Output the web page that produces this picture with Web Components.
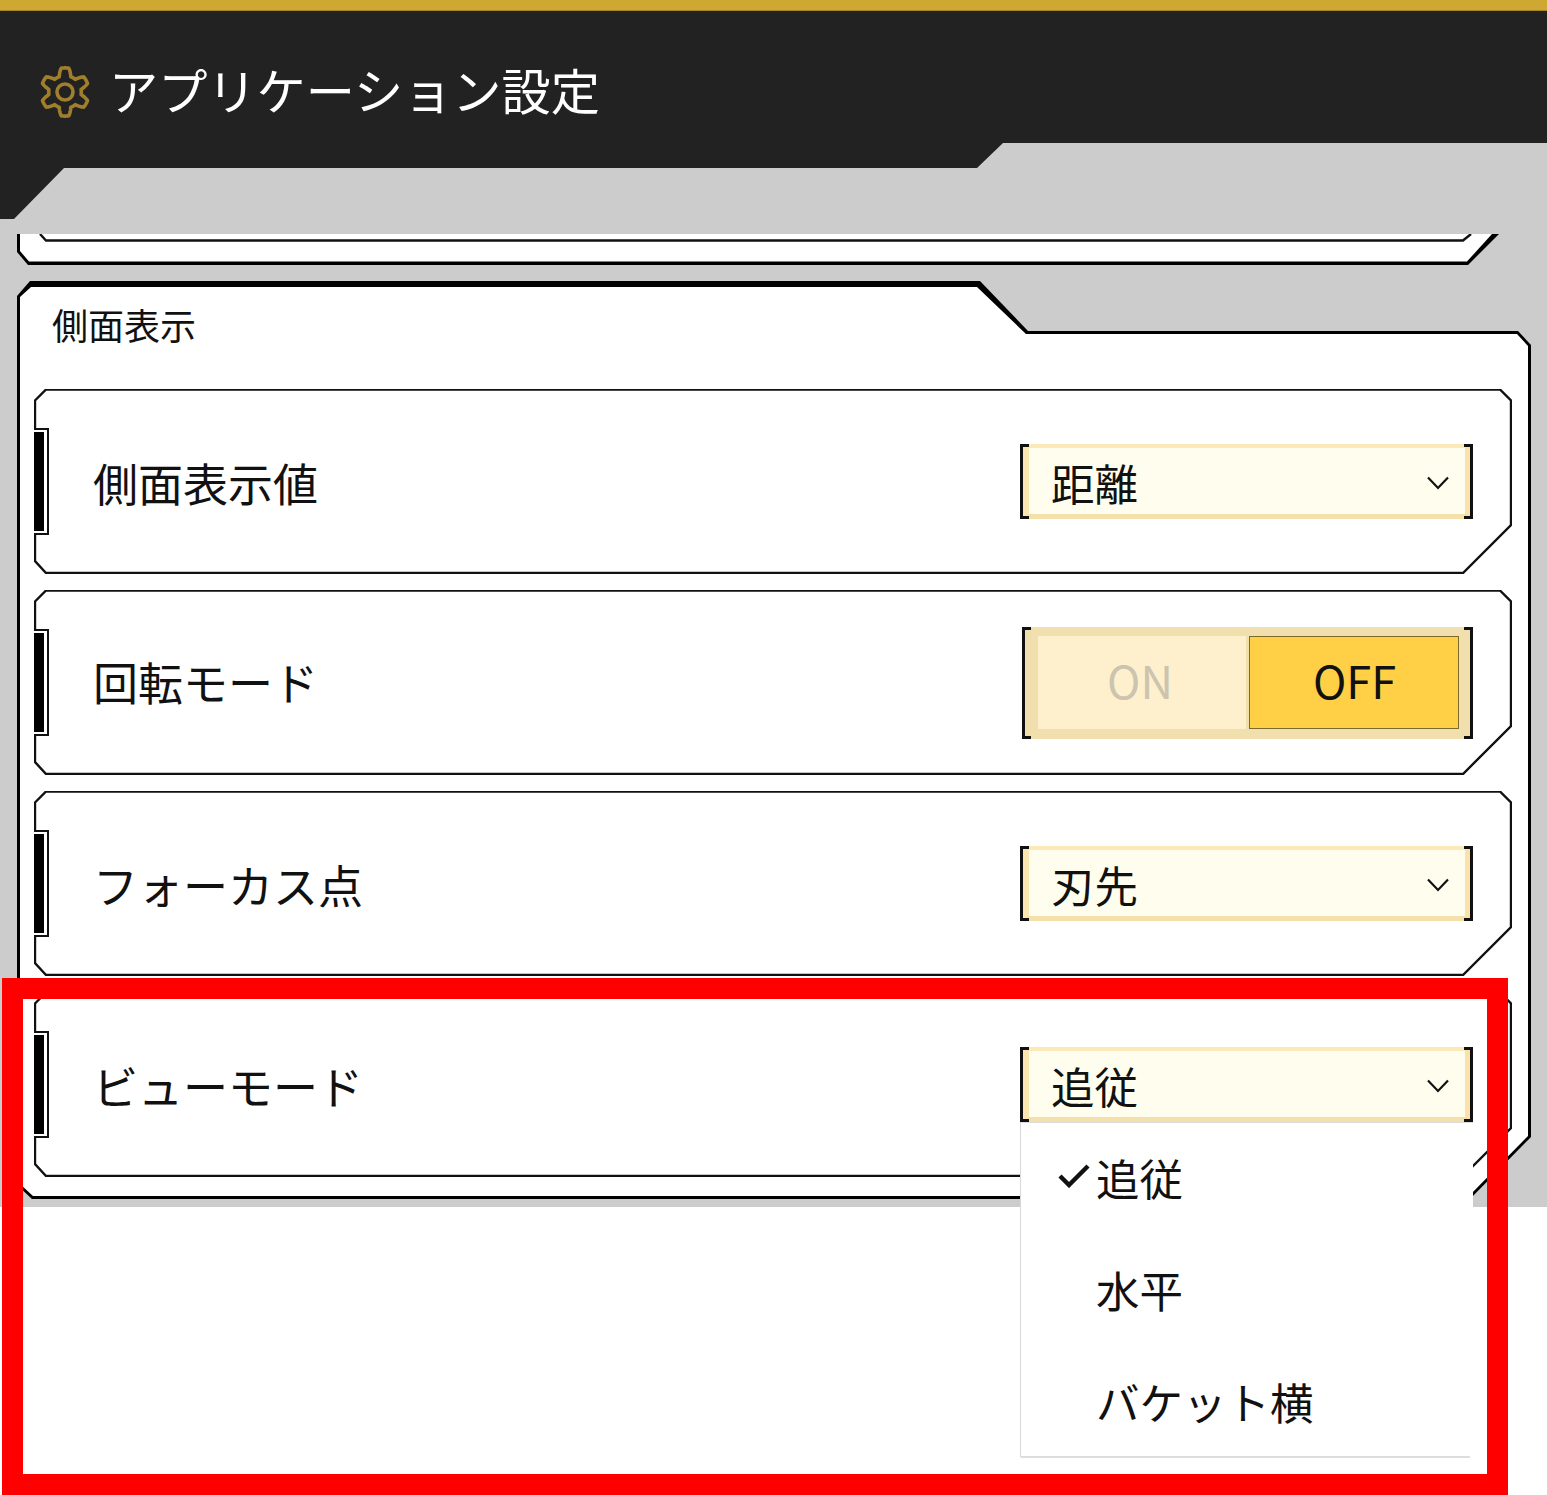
<!DOCTYPE html>
<html lang="ja">
  <head>
    <meta charset="utf-8" />
    <title>アプリケーション設定</title>
    <style>
      html, body { margin: 0; padding: 0; background: #fff; }
      body {
        width: 1547px;
        height: 1495px;
        overflow: hidden;
        position: relative;
        font-family: "Noto Sans CJK JP", "Noto Sans", sans-serif;
        color: #111;
      }
    </style>
  </head>
  <body>
    <app-screen>
      <app-header slot="header">アプリケーション設定</app-header>
      <clipped-card slot="clipped"></clipped-card>
      <settings-section heading="側面表示">
        <setting-row>
          <span slot="label">側面表示値</span>
          <select-box slot="control">距離</select-box>
        </setting-row>
        <setting-row>
          <span slot="label" style="position: relative; top: -2px">回転モード</span>
          <on-off-switch slot="control"></on-off-switch>
        </setting-row>
        <setting-row>
          <span slot="label">フォーカス点</span>
          <select-box slot="control">刃先</select-box>
        </setting-row>
        <setting-row>
          <span slot="label">ビューモード</span>
          <select-box slot="control">
            追従
            <drop-menu slot="menu">
              <menu-item checked>追従</menu-item>
              <menu-item>水平</menu-item>
              <menu-item>バケット横</menu-item>
            </drop-menu>
          </select-box>
        </setting-row>
      </settings-section>
    </app-screen>
    <red-highlight></red-highlight>

    <script>
      function defineEl(name, html, setup) {
        customElements.define(
          name,
          class extends HTMLElement {
            constructor() {
              super();
              var shadow = this.attachShadow({ mode: "open" });
              shadow.innerHTML = html;
              if (setup) setup(shadow, this);
            }
          }
        );
      }

      // rounded 6 tooth gear, teeth at 12 o'clock
      function gearPath() {
        var cx = 26, cy = 27, d = "";
        for (var i = 0; i <= 240; i++) {
          var t = (i / 240) * Math.PI * 2;
          var c = Math.cos(6 * t);
          var k = Math.max(-1, Math.min(1, c * 1.7));
          var r = 20.2 + 3.9 * k;
          var x = cx + r * Math.sin(t);
          var y = cy - r * Math.cos(t);
          d += (i ? "L" : "M") + x.toFixed(2) + " " + y.toFixed(2);
        }
        return d + "Z";
      }

      defineEl(
        "app-screen",
        `<style>
          :host { display: block; height: 1207px; background: #ccc; }
          .gold { height: 10px; background: #cfa833; border-bottom: 1px solid #a3862c; }
          .body { padding: 15px 16px 0 17px; display: flex; flex-direction: column; gap: 16px; }
        </style>
        <div class="gold"></div>
        <slot name="header"></slot>
        <div class="body">
          <slot name="clipped"></slot>
          <slot></slot>
        </div>`
      );

      defineEl(
        "app-header",
        `<style>
          :host {
            display: flex;
            align-items: center;
            gap: 18px;
            box-sizing: border-box;
            height: 208px;
            padding: 48px 0 100px 39px;
            background: #222;
            color: #fff;
            font-size: 49.2px;
            line-height: 60px;
            clip-path: polygon(0 0, 1547px 0, 1547px 132px, 1003px 132px, 977px 157px, 64px 157px, 14px 208px, 0 208px);
          }
          svg { display: block; flex: none; position: relative; top: 3px; }
        </style>
        <svg width="52" height="54" viewBox="0 0 52 54" fill="none" stroke="#a07f2c" stroke-width="3.6">
          <path id="g" stroke-linejoin="round"></path>
          <circle cx="26" cy="27" r="8"></circle>
        </svg>
        <slot></slot>`,
        function (s) {
          s.getElementById("g").setAttribute("d", gearPath());
        }
      );

      defineEl(
        "clipped-card",
        `<style>
          :host { display: block; height: 31px; }
          svg { display: block; }
        </style>
        <svg width="1514" height="31" viewBox="0 0 1514 31">
          <polygon points="0,0 1482,0 1451,31 11,31 0,18" fill="#000"></polygon>
          <polygon points="3,0 1475,0 1450,27.5 12,27.5 3,17" fill="#fff"></polygon>
          <polyline points="23,0 29,6.5 1446,6.5 1454,0" fill="none" stroke="#111" stroke-width="2.4"></polyline>
        </svg>`
      );

      defineEl(
        "settings-section",
        `<style>
          :host { display: block; position: relative; width: 1514px; height: 918px; }
          svg { position: absolute; left: 0; top: 0; display: block; }
          h2 {
            position: relative;
            margin: 0;
            padding-left: 35px;
            height: 92px;
            font-size: 36px;
            line-height: 86px;
            font-weight: 400;
          }
          .rows {
            position: relative;
            display: flex;
            flex-direction: column;
            gap: 16px;
            margin: 16px 0 0 17px;
          }
        </style>
        <svg width="1514" height="918" viewBox="0 0 1514 918">
          <polygon points="0,15 13,0 963,0 1011,50 1501,50 1514,64 1514,856 1453,918 15,918 0,904" fill="#000"></polygon>
          <polygon points="3,16 14,6 960,6 1009,53 1500,53 1511,65 1511,855 1452,915 16,915 3,903" fill="#fff"></polygon>
        </svg>
        <h2></h2>
        <div class="rows"><slot></slot></div>`,
        function (s, el) {
          s.querySelector("h2").textContent = el.getAttribute("heading");
        }
      );

      defineEl(
        "setting-row",
        `<style>
          :host {
            display: flex;
            position: relative;
            align-items: center;
            justify-content: space-between;
            box-sizing: border-box;
            width: 1477px;
            height: 185px;
            padding: 0 38px 0 59px;
          }
          svg { position: absolute; left: 0; top: 0; display: block; }
          .tab {
            position: absolute;
            left: 0;
            top: 39px;
            box-sizing: border-box;
            width: 15px;
            height: 107px;
            background: #fff;
            border: 2px solid #111;
            border-left: 0;
          }
          .tab::before {
            content: "";
            position: absolute;
            left: 0;
            top: 2px;
            width: 10px;
            height: 99px;
            background: #000;
          }
          .label {
            position: relative;
            font-size: 45px;
            line-height: 60px;
            top: 1px;
          }
          .control { position: relative; display: flex; }
        </style>
        <svg width="1478" height="185" viewBox="0 0 1478 185">
          <polygon points="1,11.5 12,0.5 1466,0.5 1477,11.5 1477,136 1429,184 12,184 1,172" fill="#fff" stroke="#111" stroke-width="2.4"></polygon>
        </svg>
        <div class="tab"></div>
        <div class="label"><slot name="label"></slot></div>
        <div class="control"><slot name="control"></slot></div>`
      );

      defineEl(
        "select-box",
        `<style>
          :host {
            display: block;
            position: relative;
            box-sizing: border-box;
            width: 453px;
            height: 75px;
            padding: 0 2px 0 3px;
            font-size: 43.5px;
          }
          .face {
            box-sizing: border-box;
            display: flex;
            align-items: center;
            justify-content: space-between;
            height: 75px;
            padding: 0 16px 0 22px;
            background: #fffeee;
            border-style: solid;
            border-width: 4px 6px 5px 6px;
            border-color: #fbe9b8 #fbe2aa #f3e0ab #fbe6b2;
          }
          .text { line-height: 60px; position: relative; top: 2px; }
          .br {
            position: absolute;
            top: 0;
            width: 9px;
            height: 75px;
            box-sizing: border-box;
            border: solid #111;
          }
          .l { left: 0; border-width: 3px 0 3px 3px; }
          .r { right: 0; border-width: 3px 3px 3px 0; }
          svg { display: block; position: relative; top: 2px; }
          ::slotted(drop-menu) { position: absolute; left: 0; top: 100%; z-index: 5; }
        </style>
        <div class="face">
          <span class="text"><slot></slot></span>
          <svg width="22" height="14" viewBox="0 0 22 14" fill="none" stroke="#111" stroke-width="2.2">
            <polyline points="1,1.5 11,12 21,1.5"></polyline>
          </svg>
        </div>
        <div class="br l"></div>
        <div class="br r"></div>
        <slot name="menu"></slot>`
      );

      defineEl(
        "on-off-switch",
        `<style>
          :host {
            display: flex;
            position: relative;
            box-sizing: border-box;
            width: 451px;
            height: 112px;
            gap: 3px;
            padding: 9px 14px 10px 16px;
            font-family: "Noto Sans CJK JP", sans-serif;
            font-size: 45px;
            background: linear-gradient(#f2dfae, #f2dfae) no-repeat 3px 0 / 446px 100%;
          }
          div.btn {
            box-sizing: border-box;
            height: 93px;
            display: flex;
            align-items: center;
            justify-content: center;
          }
          span { position: relative; top: -3px; }
          .on { width: 208px; padding-right: 4px; background: #fef0cd; color: #ccc4ae; }
          .off { width: 210px; padding-left: 1px; background: #ffd045; border: 1px solid #7a6a30; color: #111; }
          .br {
            position: absolute;
            top: 0;
            width: 9px;
            height: 112px;
            box-sizing: border-box;
            border: solid #111;
          }
          .l { left: 0; border-width: 3px 0 3px 3px; }
          .r { right: 0; border-width: 3px 3px 3px 0; }
        </style>
        <div class="btn on"><span>ON</span></div>
        <div class="btn off"><span>OFF</span></div>
        <div class="br l"></div>
        <div class="br r"></div>`
      );

      defineEl(
        "drop-menu",
        `<style>
          :host {
            display: block;
            box-sizing: border-box;
            width: 453px;
            height: 335px;
            background: #fff;
            border-left: 1px solid #d8d8d8;
            border-top: 1px solid #ddd;
          }
          .line { height: 2px; margin-top: -3px; background: #ddd; width: 449px; }
        </style>
        <slot></slot>
        <div class="line"></div>`
      );

      defineEl(
        "menu-item",
        `<style>
          :host {
            display: flex;
            align-items: center;
            box-sizing: border-box;
            height: 112px;
            padding-left: 37px;
            font-size: 43.5px;
          }
          svg { display: block; flex: none; width: 32px; height: 24px; margin-right: 6px; position: relative; top: -3px; }
          svg.off { visibility: hidden; }
          span { position: relative; top: -2px; }
        </style>
        <svg viewBox="0 0 32 24" fill="none" stroke="#111" stroke-width="4.4">
          <polyline points="2,12 11,21 30,2"></polyline>
        </svg>
        <span><slot></slot></span>`,
        function (s, el) {
          if (!el.hasAttribute("checked")) s.querySelector("svg").classList.add("off");
        }
      );

      defineEl(
        "red-highlight",
        `<style>
          :host {
            position: absolute;
            left: 2px;
            top: 978px;
            box-sizing: border-box;
            width: 1506px;
            height: 517px;
            border: 21px solid #f00;
            pointer-events: none;
          }
        </style>`
      );
    </script>
  </body>
</html>
